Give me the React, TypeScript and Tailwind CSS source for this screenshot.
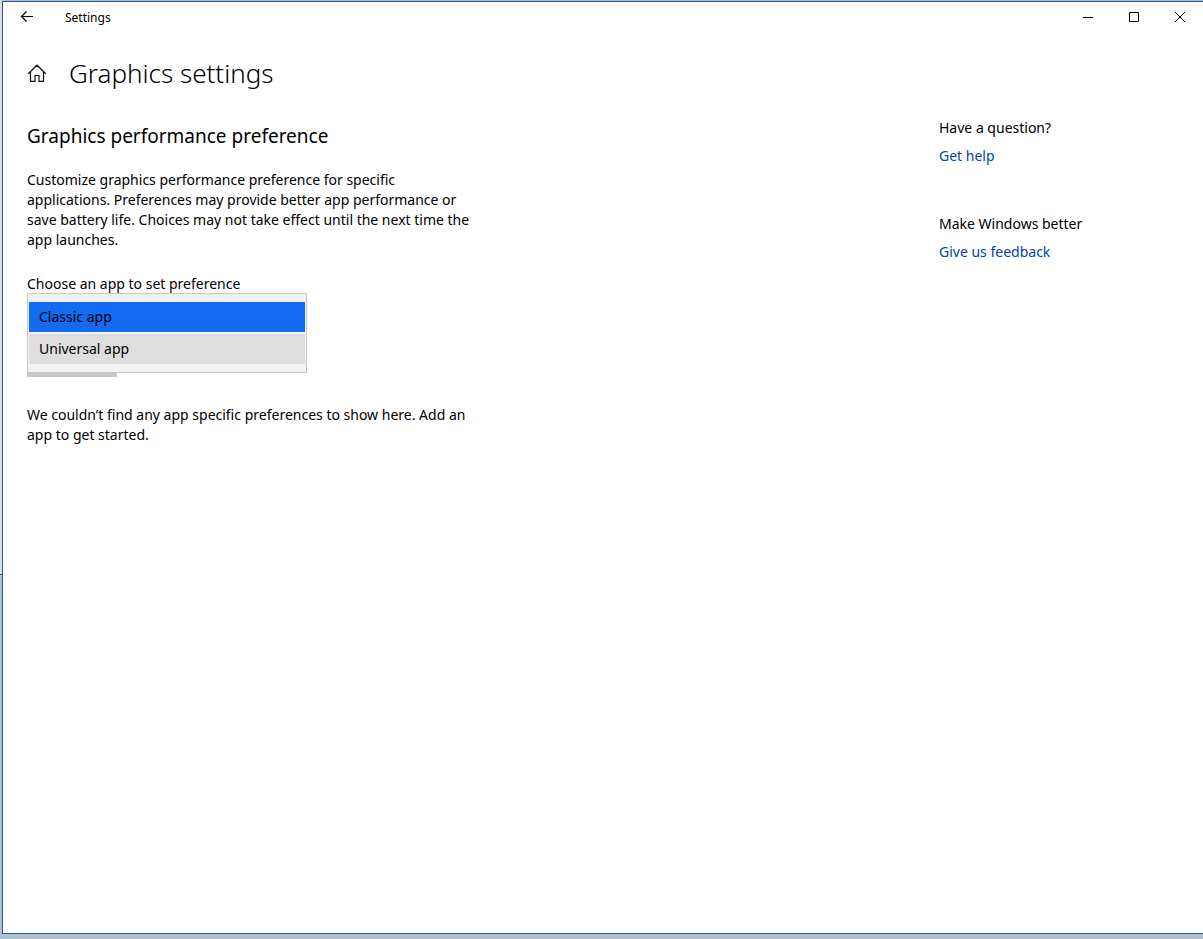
import { useState } from 'react';

// ── Data ──────────────────────────────────────────────────────────────────

const APP_TYPES = ['Classic app', 'Universal app'];

const HELP_SECTIONS = [
  { title: 'Have a question?', link: 'Get help' },
  { title: 'Make Windows better', link: 'Give us feedback' },
];

// ── Title bar ─────────────────────────────────────────────────────────────

function TitleBar() {
  return (
    <header className="flex h-8 items-start">
      <button type="button" aria-label="Back" className="flex h-[30px] w-12 items-center justify-center">
        <svg width="14" height="12" viewBox="0 0 14 12" fill="none" stroke="#000" strokeWidth="1.2">
          <path d="M1.5 5.5H13M6.5 .5L1.5 5.5L6.5 10.5" />
        </svg>
      </button>
      <span className="ml-3.5 flex-1 text-xs leading-8">Settings</span>
      <button type="button" aria-label="Minimize" className="flex h-[30px] w-[46px] items-center justify-center">
        <svg width="10" height="10" viewBox="0 0 10 10" stroke="#000">
          <path d="M0 5.5H10" />
        </svg>
      </button>
      <button type="button" aria-label="Maximize" className="flex h-[30px] w-[46px] items-center justify-center">
        <svg width="10" height="10" viewBox="0 0 10 10" fill="none" stroke="#000">
          <path d="M.5 .5H9.5V9.5H.5Z" />
        </svg>
      </button>
      <button type="button" aria-label="Close" className="flex h-[30px] w-[46px] items-center justify-center">
        <svg width="10" height="10" viewBox="0 0 10 10" stroke="#000">
          <path d="M0 0L10 10M10 0L0 10" />
        </svg>
      </button>
    </header>
  );
}

// ── App type picker ───────────────────────────────────────────────────────

function AppTypePicker() {
  const [selected, setSelected] = useState(APP_TYPES[0]);

  return (
    <div>
      <p id="app-type-label" className="leading-[19px]">Choose an app to set preference</p>
      <ul
        role="listbox"
        aria-labelledby="app-type-label"
        className="flex w-[280px] flex-col gap-0.5 border border-[#c8c8c8] bg-[#f2f2f2] px-px py-2"
      >
        {APP_TYPES.map(type => (
          <li key={type} role="option" aria-selected={type === selected}>
            <button
              type="button"
              onClick={() => setSelected(type)}
              className={`block h-[30px] w-full px-2.5 text-left ${
                type === selected ? 'bg-[#126bf1]' : 'bg-[#dedede]'
              }`}
            >
              {type}
            </button>
          </li>
        ))}
      </ul>
      {/* Lower edge of the button behind the open list */}
      <button type="button" aria-label="Browse" className="block h-1 w-[90px] bg-[#c8c8c8]" />
    </div>
  );
}

// ── Page ──────────────────────────────────────────────────────────────────

export default function App() {
  return (
    <div className="flex min-h-screen bg-[#b4bdcd] font-['Noto_Sans','Open_Sans',sans-serif] text-sm leading-5 text-black">
      {/* Sliver of the window behind */}
      <div className="flex w-0.5 shrink-0 flex-col">
        <div className="h-[575px] border-b border-[#1f5aa6] bg-[#dcdee2]" />
        <div className="flex-1 bg-[#b4bdcd]" />
      </div>

      <div className="mt-px mb-[5px] flex flex-1 flex-col border-y border-l border-[#1d57a5] bg-white">
        <TitleBar />

        <div className="mt-[23px] ml-6 flex items-center">
          <a href="#home" aria-label="Home" className="w-[42px]">
            <svg width="20" height="20" viewBox="0 0 20 20" fill="none" stroke="#111" strokeWidth="1.2">
              <path d="M1.2 10.8L10 2.2L18.8 10.8M3.5 9V18.4H8V12.5H12V18.4H16.5V9" />
            </svg>
          </a>
          <h1 className="text-[26px] leading-8 font-light">Graphics settings</h1>
        </div>

        <div className="mt-px flex justify-between">
          <main className="ml-6 w-[450px] pt-8">
            <h2 className="text-[19px] leading-7">Graphics performance preference</h2>
            <p className="mt-5">
              Customize graphics performance preference for specific applications. Preferences may
              provide better app performance or save battery life. Choices may not take effect until
              the next time the app launches.
            </p>
            <div className="mt-6">
              <AppTypePicker />
            </div>
            <p className="mt-7">
              We couldn’t find any app specific preferences to show here. Add an app to get started.
            </p>
          </main>

          <aside className="flex w-[264px] flex-col gap-12 pt-7">
            {HELP_SECTIONS.map(({ title, link }) => (
              <section key={title}>
                <h3>{title}</h3>
                <a href="#help" className="mt-2 inline-block text-[#0044a9]">
                  {link}
                </a>
              </section>
            ))}
          </aside>
        </div>
      </div>
    </div>
  );
}
